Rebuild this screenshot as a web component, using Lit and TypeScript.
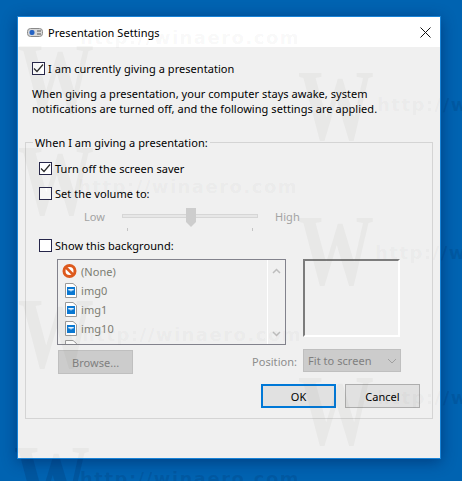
import { LitElement, html, css, svg } from "lit";
import { customElement } from "lit/decorators.js";

const TXT = "http://winaero.com";
const letters = [
  { x: 80, y: 26 }, { x: 377, y: 93 }, { x: 78, y: 175 }, { x: 375, y: 241 },
  { x: 82, y: 323 }, { x: 377, y: 386 }, { x: 80, y: 467 },
];
const logos = [
  { x: 18, y: 27 }, { x: 298, y: 54 }, { x: 18, y: 129 }, { x: 298, y: 199 },
  { x: 18, y: 282 }, { x: 298, y: 359 }, { x: 14, y: 429 },
];
const WIN_X = 18, WIN_Y = 17;

@customElement("app-root")
export class AppRoot extends LitElement {
  static styles = css`
    :host { display: block; width: 462px; height: 481px; overflow: hidden; font-family: "Noto Sans", "Open Sans", sans-serif; font-size: 11px; letter-spacing: .05px; color: #000; }
    .desk { position: relative; width: 462px; height: 481px; background: #0063b1; padding: 16px 21px 22px 17px; box-sizing: border-box; overflow: hidden; }
    .win { position: relative; height: 443px; width: 424px; background: #f0f0f0; border: 1px solid #1883d7; box-shadow: 0 3px 14px rgba(0,20,70,.45); display: flex; flex-direction: column; box-sizing: border-box; }
    .title { position: relative; z-index: 0; height: 30px; background: #fff; display: flex; align-items: center; padding: 0 0 0 9px; gap: 5px; flex: none; }
    .title span { flex: 1; }
    .close { width: 30px; height: 30px; display: flex; align-items: center; justify-content: center; }
    .body { position: relative; z-index: 2; padding: 15px 7px 0 7px; flex: 1; display: flex; flex-direction: column; }
    .chk { display: flex; align-items: center; gap: 3px; height: 13px; line-height: 13px; white-space: nowrap; }
    .box { width: 13px; height: 13px; box-sizing: border-box; border: 1px solid #26264a; background: #fff; flex: none; display: flex; align-items: center; justify-content: center; }
    .top { margin-left: 7px; }
    .para { margin: 11px 0 0 7px; line-height: 15px; white-space: nowrap; }
    .group { position: relative; margin-top: 26px; border: 1px solid #d4d4d4; height: 277px; width: 408px; box-sizing: border-box; padding: 19px 0 0 13px; }
    .legend { position: absolute; left: 7px; top: -8px; padding: 0 2px; background: #f0f0f0; line-height: 15px; white-space: nowrap; }
    .vol { margin-top: 12px; }
    .slider { display: flex; align-items: flex-start; margin: 8px 0 0 45px; height: 31px; color: #a3a3a3; }
    .lbl { line-height: 16px; margin-top: 1px; width: 38px; }
    .track { position: relative; width: 136px; height: 26px; }
    .rail { position: absolute; left: 0; right: 0; top: 6px; height: 4px; background: #e7e7e7; border: 1px solid #d6d6d6; box-sizing: border-box; }
    .thumb { position: absolute; left: 64px; top: 0; display: block; }
    .tick { position: absolute; top: 20px; width: 1px; height: 3px; background: #c4c4c4; }
    .tick.a { left: 5px; }
    .tick.b { left: 130px; }
    .high { margin-left: 17px; }
    .row { display: flex; margin: 7px 0 0 18px; align-items: flex-start; }
    .list { width: 229px; height: 86px; box-sizing: border-box; border: 1px solid #82828c; overflow: hidden; display: flex; }
    .items { flex: 1; padding-top: 2px; color: #7c7c72; overflow: hidden; }
    .item { display: flex; align-items: center; height: 19px; gap: 4px; padding-left: 4px; line-height: 19px; }
    .ic { width: 15px; display: flex; justify-content: flex-end; flex: none; }
    .scroll { width: 18px; border-left: 1px solid #fff; display: flex; flex-direction: column; justify-content: space-between; align-items: center; padding: 8px 0 7px; box-sizing: border-box; }
    .preview { margin-left: 17px; width: 97px; height: 78px; box-sizing: border-box; border: 2px solid; border-color: #7c7c7c #fff #fff #7c7c7c; }
    .row2 { display: flex; align-items: flex-start; margin: 4px 0 0 19px; height: 25px; }
    .browse { width: 75px; height: 24px; margin-top: 1px; box-sizing: border-box; border: 1px solid #bfbfbf; background: #ccc; color: #7f7f7f; display: flex; align-items: center; padding-left: 13px; }
    .pos { margin: 4px 0 0 119px; width: 51px; color: #8d8d8d; line-height: 18px; }
    .sel { width: 98px; height: 23px; box-sizing: border-box; border: 1px solid #bfbfbf; background: #ccc; color: #7f7f7f; display: flex; align-items: center; justify-content: space-between; padding: 0 3px 0 4px; }
    .btns { display: flex; justify-content: flex-end; gap: 9px; margin: 10px 12px 0 0; }
    .btn { width: 75px; height: 24px; box-sizing: border-box; border: 1px solid #adadad; background: #e1e1e1; display: flex; align-items: center; justify-content: center; }
    .btn.def { border: 2px solid #0078d7; }
    .wm { position: absolute; inset: 0; pointer-events: none; overflow: hidden; z-index: 3; }
    .wm span { position: absolute; font-family: "DejaVu Sans", sans-serif; font-weight: 700; font-size: 18px; letter-spacing: 1.5px; line-height: 24px; white-space: nowrap; color: rgba(90,90,90,.05); }
    .wm .w { font-family: "Liberation Serif", serif; font-size: 76px; line-height: 76px; letter-spacing: 0; transform: scaleY(1.35); transform-origin: top left; color: rgba(100,100,70,.05); }
    .dark { z-index: 0; }
    .dark span { color: rgba(0,20,60,.13); }
    .dark .w { color: rgba(0,20,60,.15); }
  `;

  private check() {
    return svg`<svg width="11" height="11" viewBox="0 0 11 11"><path d="M1 5.5 4 8.5 10 1.5" fill="none" stroke="#2a2a2a" stroke-width="1.2"/></svg>`;
  }

  private cb(label: string, on: boolean, cls = "") {
    return html`<div class="chk ${cls}"><div class="box">${on ? this.check() : ""}</div><span>${label}</span></div>`;
  }

  private file() {
    return svg`<svg width="12" height="15" viewBox="0 0 12 15"><path d="M.5.5H8L11.5 3.5V14.5H.5Z" fill="#fff" stroke="#9a9a9a"/><rect x="2" y="4" width="8" height="8" fill="#0a78d2"/><path d="M3 6H9L8 8 7 7 6 9 5 7 4 8Z" fill="#e4f2fd"/></svg>`;
  }

  private darkMarks() {
    return html`<div class="wm dark">
      ${[logos[6]].map(m => html`<span class="w" style="left:${m.x}px;top:${m.y}px">W</span>`)}
      ${[letters[1], letters[3], letters[5], letters[6]].map(m => html`<span style="left:${m.x}px;top:${m.y}px">${TXT}</span>`)}
    </div>`;
  }

  private lightMarks() {
    return html`<div class="wm">
      ${logos.map(m => html`<span class="w" style="left:${m.x - WIN_X}px;top:${m.y - WIN_Y}px">W</span>`)}
      ${letters.slice(0, 6).map(m => html`<span style="left:${m.x - WIN_X}px;top:${m.y - WIN_Y}px">${TXT}</span>`)}
    </div>`;
  }

  render() {
    return html`<div class="desk">
      ${this.darkMarks()}
      <div class="win">
        <div class="title">
          <svg width="16" height="9" viewBox="0 0 16 9"><rect x=".5" y=".5" width="15" height="8" rx="3" fill="#d8d8d8" stroke="#8a8a8a"/><rect x="2.5" y="2" width="5" height="5" rx="2" fill="#2563c4"/><path d="M10 3h4M10 6h4" stroke="#555"/></svg>
          <span>Presentation Settings</span>
          <div class="close"><svg width="11" height="11" viewBox="0 0 11 11"><path d="M.5.5 10.5 10.5M10.5.5.5 10.5" stroke="#111" stroke-width="1"/></svg></div>
        </div>
        <div class="body">
          ${this.cb("I am currently giving a presentation", true, "top")}
          <div class="para">When giving a presentation, your computer stays awake, system<br>notifications are turned off, and the following settings are applied.</div>
          <div class="group">
            <div class="legend">When I am giving a presentation:</div>
            ${this.cb("Turn off the screen saver", true)}
            ${this.cb("Set the volume to:", false, "vol")}
            <div class="slider">
              <div class="lbl">Low</div>
              <div class="track">
                <div class="rail"></div>
                <svg class="thumb" width="10" height="19" viewBox="0 0 10 19"><path d="M0 0H10V14L5 19 0 14Z" fill="#cdcdcd"/></svg>
                <div class="tick a"></div>
                <div class="tick b"></div>
              </div>
              <div class="lbl high">High</div>
            </div>
            ${this.cb("Show this background:", false)}
            <div class="row">
              <div class="list">
                <div class="items">
                  <div class="item"><div class="ic"><svg width="15" height="15" viewBox="0 0 15 15"><circle cx="7.5" cy="7" r="5.5" fill="#fff" stroke="#dd5a1e" stroke-width="3"/><path d="M3.5 3 11.5 11" stroke="#dd5a1e" stroke-width="2.5"/></svg></div><span>(None)</span></div>
                  ${["img0", "img1", "img10", "img11"].map(n => html`<div class="item"><div class="ic">${this.file()}</div><span>${n}</span></div>`)}
                </div>
                <div class="scroll">
                  <svg width="9" height="6" viewBox="0 0 9 6"><path d="M1 5 4.5 1.5 8 5" fill="none" stroke="#bdbdbd" stroke-width="1.5"/></svg>
                  <svg width="9" height="6" viewBox="0 0 9 6"><path d="M1 1 4.5 4.5 8 1" fill="none" stroke="#bdbdbd" stroke-width="1.5"/></svg>
                </div>
              </div>
              <div class="preview"></div>
            </div>
            <div class="row2">
              <div class="browse">Browse...</div>
              <div class="pos">Position:</div>
              <div class="sel"><span>Fit to screen</span><svg width="10" height="6" viewBox="0 0 10 6"><path d="M1 1 5 5 9 1" fill="none" stroke="#a0a0a0"/></svg></div>
            </div>
            <div class="btns">
              <div class="btn def">OK</div>
              <div class="btn">Cancel</div>
            </div>
          </div>
        </div>
        ${this.lightMarks()}
      </div>
    </div>`;
  }
}
